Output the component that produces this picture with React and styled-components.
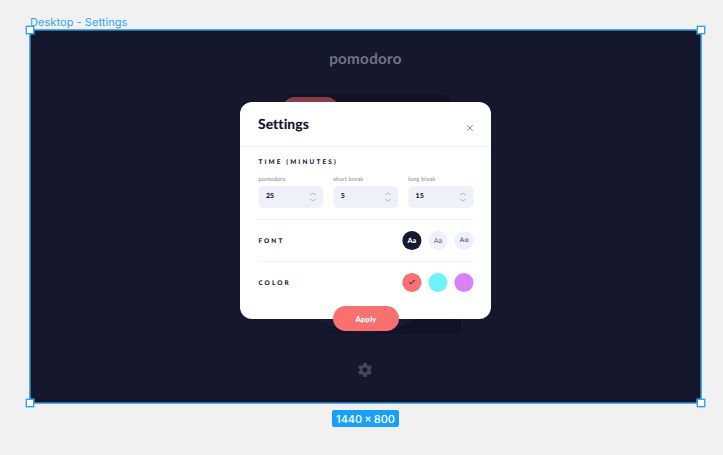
import React from "react";
import styled, { createGlobalStyle } from "styled-components";

const Global = createGlobalStyle`
  * { box-sizing: border-box; }
  body { margin: 0; background: #f1f1f1; overflow: hidden; font-family: Lato, "Open Sans", sans-serif; text-rendering: geometricPrecision; }
`;
const Canvas = styled.main`
  width: 723px; height: 455px; padding: 15px 22px 0 30px;
  display: flex; flex-direction: column; background: #f1f1f1;
`;
const FrameLabel = styled.div`
  height: 15px; font: 11px/15px Inter, sans-serif; letter-spacing: 0.06px; color: #32a5f5; white-space: nowrap;
`;
const Artboard = styled.section`
  position: relative; width: 671px; height: 373px; background: #15172c;
  display: flex; flex-direction: column; align-items: center;
  box-shadow: 0 0 0 1px #52abe6, inset 0 0 0 1px #286da0;
`;
const Handle = styled.i`
  position: absolute; width: 8px; height: 8px; background: #fff; border: 1px solid #2ba4f7; box-shadow: 0 0 0 0.5px #5ab7f5;
  ${({ $right }) => ($right ? "right: -4px;" : "left: -4px;")}
  ${({ $bottom }) => ($bottom ? "bottom: -4px;" : "top: -4px;")}
`;
const Logo = styled.h1`
  margin: 19px 0 0; font-size: 15.2px; line-height: 20px; font-weight: 700; letter-spacing: 0.3px; color: #717389;
`;
const Tabs = styled.div`
  width: 173px; height: 29px; margin: 25px 0 0 1px; padding: 3px; border-radius: 15px; background: #101226;
`;
const ActiveTab = styled.div`
  width: 55px; height: 23px; border-radius: 12px; background: #863f49;
`;
const Clock = styled.div`
  width: 191px; height: 181px; margin-top: 30px; overflow: hidden; display: flex; align-items: flex-end; justify-content: center;
  background: linear-gradient(90deg, #15172c, #101225 75%, #101225);
`;
const Dial = styled.div`
  flex: none; width: 191px; height: 191px; border-radius: 50%; background: #171a34; transform: translateY(-1px);
`;
const Gear = styled.svg`
  width: 14px; height: 14px; margin-top: 29px; margin-right: 1px; fill: #44465a;
`;
const Dialog = styled.form`
  position: absolute; left: 210px; top: 72.4px; width: 251px; height: 216.4px; border-radius: 12px; background: #fff;
  color: #161932; display: flex; flex-direction: column; align-items: center;
`;
const Header = styled.header`
  width: 100%; height: 44.4px; padding: 0 17px 0 18px; display: flex; align-items: center; justify-content: space-between;
  border-bottom: 1.5px solid #f3f3f4;
`;
const Title = styled.h2`
  margin: 0 0 1px; font-size: 13.9px; line-height: 18px; font-weight: 900; letter-spacing: 0.04px;
`;
const Close = styled.svg`
  width: 8px; height: 8px; margin-top: 7px; stroke: #85879a; stroke-width: 1; fill: none;
`;
const Content = styled.div`
  width: 215px; flex: none; display: flex; flex-direction: column; transform: translateX(0.4px);
`;
const TimeSection = styled.section`
  height: 73.2px; padding-top: 11px; border-bottom: 1px solid #f0f0f2;
`;
const Heading = styled.h3`
  margin: 0; font-size: 6.4px; line-height: 10px; font-weight: 900; white-space: nowrap;
  letter-spacing: ${({ $spacing }) => $spacing || "2.15px"};
`;
const Fields = styled.div`
  display: flex; justify-content: space-between; margin-top: 8px;
`;
const Field = styled.label`
  width: 65.3px; display: flex; flex-direction: column; font-size: 5.8px; line-height: 8px; color: #858795; letter-spacing: 0.1px;
`;
const NumberBox = styled.span`
  height: 22.4px; margin-top: 2px; padding: 0 7px 2px 7.5px; border-radius: 4.7px; background: #eff1fa;
  display: flex; align-items: center; justify-content: space-between; color: #161932; font-size: 7px; font-weight: 900; letter-spacing: 0;
`;
const Stepper = styled.svg`
  width: 7px; height: 10px; margin-top: 3px; stroke: #aeb0c1; stroke-width: 0.9; fill: none;
`;
const OptionRow = styled.section`
  height: ${({ $h }) => $h}px; display: flex; align-items: center; justify-content: space-between;
  border-bottom: ${({ $line }) => ($line ? "1px solid #f4f4f5" : "0")};
  ${Heading} { padding-top: 3px; }
`;
const Choices = styled.div`
  display: flex; gap: 7.4px;
`;
const Choice = styled.span`
  width: 18.7px; height: 18.7px; border-radius: 50%; background: ${({ $bg }) => $bg}; color: ${({ $fg }) => $fg || "#686a80"};
  display: flex; align-items: center; justify-content: center; line-height: 9px;
  font-family: ${({ $font }) => $font || "Lato"}, sans-serif; font-size: ${({ $size }) => $size || "7.2px"}; font-weight: ${({ $weight }) => $weight || 400};
`;
const Check = styled.svg`
  width: 7px; height: 6px; stroke: #161932; stroke-width: 1; fill: none;
`;
const Apply = styled.button`
  position: absolute; left: 93.4px; bottom: -12.2px; width: 65.3px; height: 24.7px; border: 0; border-radius: 13px; padding: 1px 0 0;
  background: #f87070; color: #fff; font: 900 7.7px/10px Lato, sans-serif; letter-spacing: 0.2px;
`;
const SizeBadge = styled.div`
  align-self: center; width: 67px; height: 17px; margin-top: 7px; border-radius: 2px; background: #18a0fb; color: #fff;
  font: 500 11px/18px Inter, sans-serif; text-align: center; white-space: nowrap; word-spacing: -0.8px;
`;

const fields = [
  { label: "pomodoro", value: 25 },
  { label: "short break", value: 5 },
  { label: "long break", value: 15 },
];

export default function App() {
  return (
    <Canvas>
      <Global />
      <FrameLabel>Desktop - Settings</FrameLabel>
      <Artboard>
        <Logo>pomodoro</Logo>
        <Tabs><ActiveTab /></Tabs>
        <Clock><Dial /></Clock>
        <Gear viewBox="2 2 20 20">
          <path d="M19.43 12.98c.04-.32.07-.64.07-.98s-.03-.66-.07-.98l2.11-1.65c.19-.15.24-.42.12-.64l-2-3.46a.5.5 0 0 0-.61-.22l-2.49 1a7.3 7.3 0 0 0-1.69-.98l-.38-2.65A.49.49 0 0 0 14 2h-4c-.25 0-.46.18-.49.42l-.38 2.65c-.61.25-1.17.59-1.69.98l-2.49-1a.5.5 0 0 0-.61.22l-2 3.46c-.13.22-.07.49.12.64l2.11 1.65c-.04.32-.07.65-.07.98s.03.66.07.98l-2.11 1.65a.5.5 0 0 0-.12.64l2 3.46c.12.22.39.3.61.22l2.49-1c.52.4 1.08.73 1.69.98l.38 2.65c.03.24.24.42.49.42h4c.25 0 .46-.18.49-.42l.38-2.65c.61-.25 1.17-.59 1.69-.98l2.49 1c.23.09.49 0 .61-.22l2-3.46a.5.5 0 0 0-.12-.64zM12 15.5a3.5 3.5 0 1 1 0-7 3.5 3.5 0 0 1 0 7z" />
        </Gear>
        <Dialog>
          <Header>
            <Title>Settings</Title>
            <Close viewBox="0 0 8 8"><path d="M1.3 1.3l5.4 5.4M6.7 1.3l-5.4 5.4" /></Close>
          </Header>
          <Content>
            <TimeSection>
              <Heading>TIME (MINUTES)</Heading>
              <Fields>
                {fields.map(({ label, value }) => (
                  <Field key={label}>
                    {label}
                    <NumberBox>
                      {value}
                      <Stepper viewBox="0 0 7 10"><path d="M.6 3l2.9-2 2.9 2M.6 7l2.9 2 2.9-2" /></Stepper>
                    </NumberBox>
                  </Field>
                ))}
              </Fields>
            </TimeSection>
            <OptionRow $h={42} $line>
              <Heading $spacing="2.1px">FONT</Heading>
              <Choices>
                <Choice $bg="#161932" $fg="#fff" $weight={900}>Aa</Choice>
                <Choice $bg="#eff1fa" $font="Roboto">Aa</Choice>
                <Choice $bg="#eff1fa" $weight={700} $font="Liberation Sans" $size="6.7px">Aɑ</Choice>
              </Choices>
            </OptionRow>
            <OptionRow $h={41}>
              <Heading $spacing="2.1px">COLOR</Heading>
              <Choices>
                <Choice $bg="#f87070"><Check viewBox="0 0 7 6"><path d="M.7 3l1.8 1.8L6.3 1" /></Check></Choice>
                <Choice $bg="#70f3f8" />
                <Choice $bg="#d881f8" />
              </Choices>
            </OptionRow>
          </Content>
          <Apply type="button">Apply</Apply>
        </Dialog>
        <Handle />
        <Handle $right />
        <Handle $bottom />
        <Handle $right $bottom />
      </Artboard>
      <SizeBadge>1440 × 800</SizeBadge>
    </Canvas>
  );
}
